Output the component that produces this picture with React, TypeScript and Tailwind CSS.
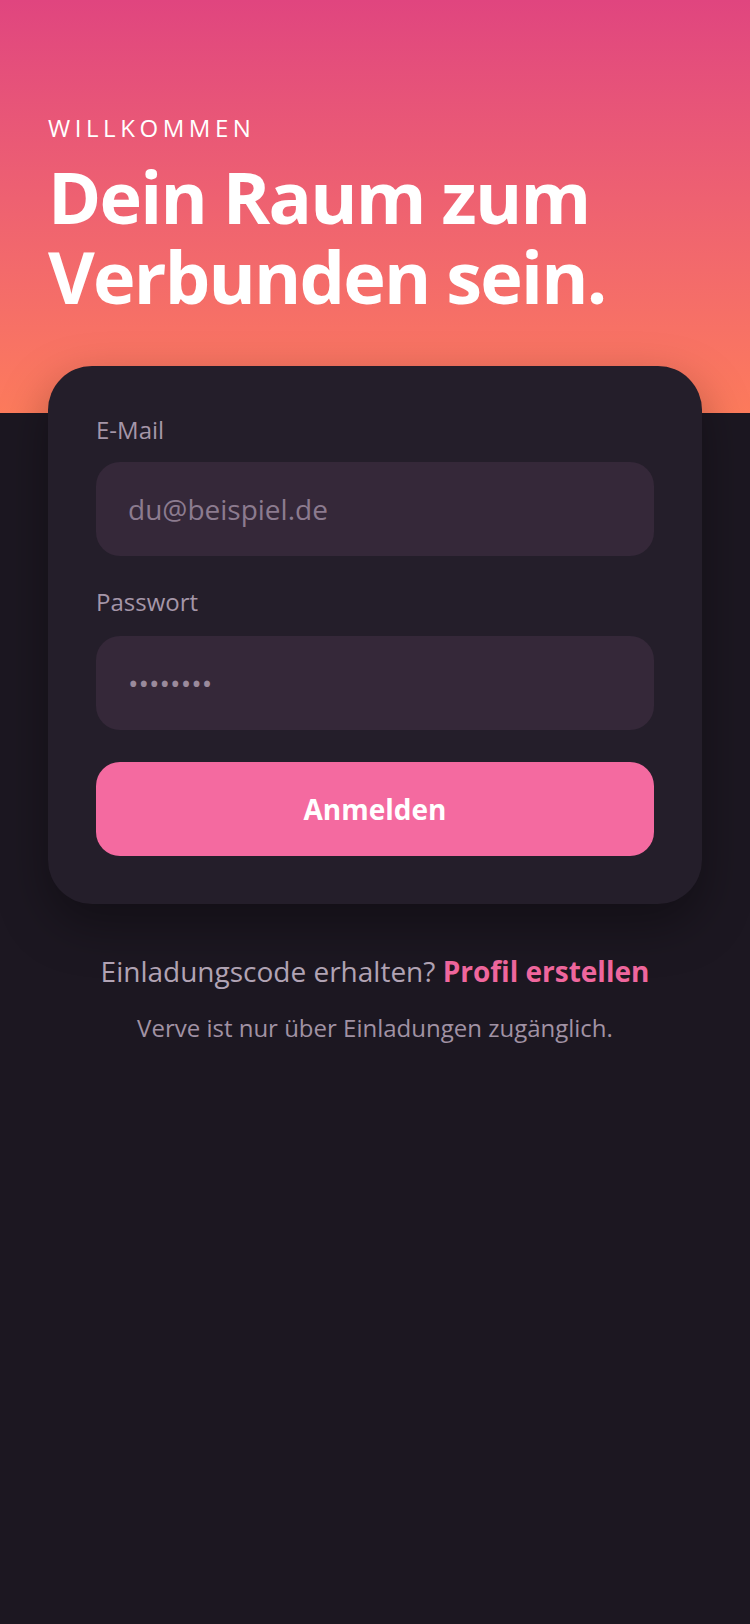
import React from "react";

export default function App() {
  return (
    <div
      className="min-h-[1624px] w-full bg-[#1c1721]"
      style={{ fontFamily: '"Open Sans", "Noto Sans", sans-serif' }}
    >
      <div className="h-[413px] bg-gradient-to-b from-[#e0457f] to-[#fd7b5c] px-12 pt-[110px]">
        <div className="text-[24px] leading-9 font-normal tracking-[0.19em] text-white">
          WILLKOMMEN
        </div>
        <h1 className="mt-[10px] text-[72px] leading-[80px] font-bold tracking-[-1.8px] text-white">
          Dein Raum zum
          <br />
          Verbunden sein.
        </h1>
      </div>

      <div className="relative mx-12 -mt-[47px] rounded-[44px] bg-[#241e2a] p-12 shadow-[0_20px_50px_rgba(0,0,0,0.35)]">
        <label className="block text-[24px] leading-8 text-[#a596a8]">E-Mail</label>
        <div className="mt-4 flex h-[94px] items-center rounded-3xl bg-[#352839] pl-8 text-[28px] text-[#8c7b8f]">
          du@beispiel.de
        </div>

        <label className="mt-[30px] block text-[24px] leading-8 text-[#a596a8]">Passwort</label>
        <div className="mt-[18px] flex h-[94px] items-center rounded-3xl bg-[#352839] pl-8 text-[28px] text-[#9a8a9c]">
          ••••••••
        </div>

        <button className="mt-8 flex h-[94px] w-full items-center justify-center rounded-3xl bg-[#f46aa0] text-[28px] font-bold text-white">
          Anmelden
        </button>
      </div>

      <div className="mt-[46px] text-center">
        <p className="text-[28px] leading-[42px] text-[#b2a4b5]">
          Einladungscode erhalten?{" "}
          <span className="font-bold text-[#f0679e]">Profil erstellen</span>
        </p>
        <p className="mt-[18px] text-[24px] leading-9 text-[#a192a4]">
          Verve ist nur über Einladungen zugänglich.
        </p>
      </div>
    </div>
  );
}
